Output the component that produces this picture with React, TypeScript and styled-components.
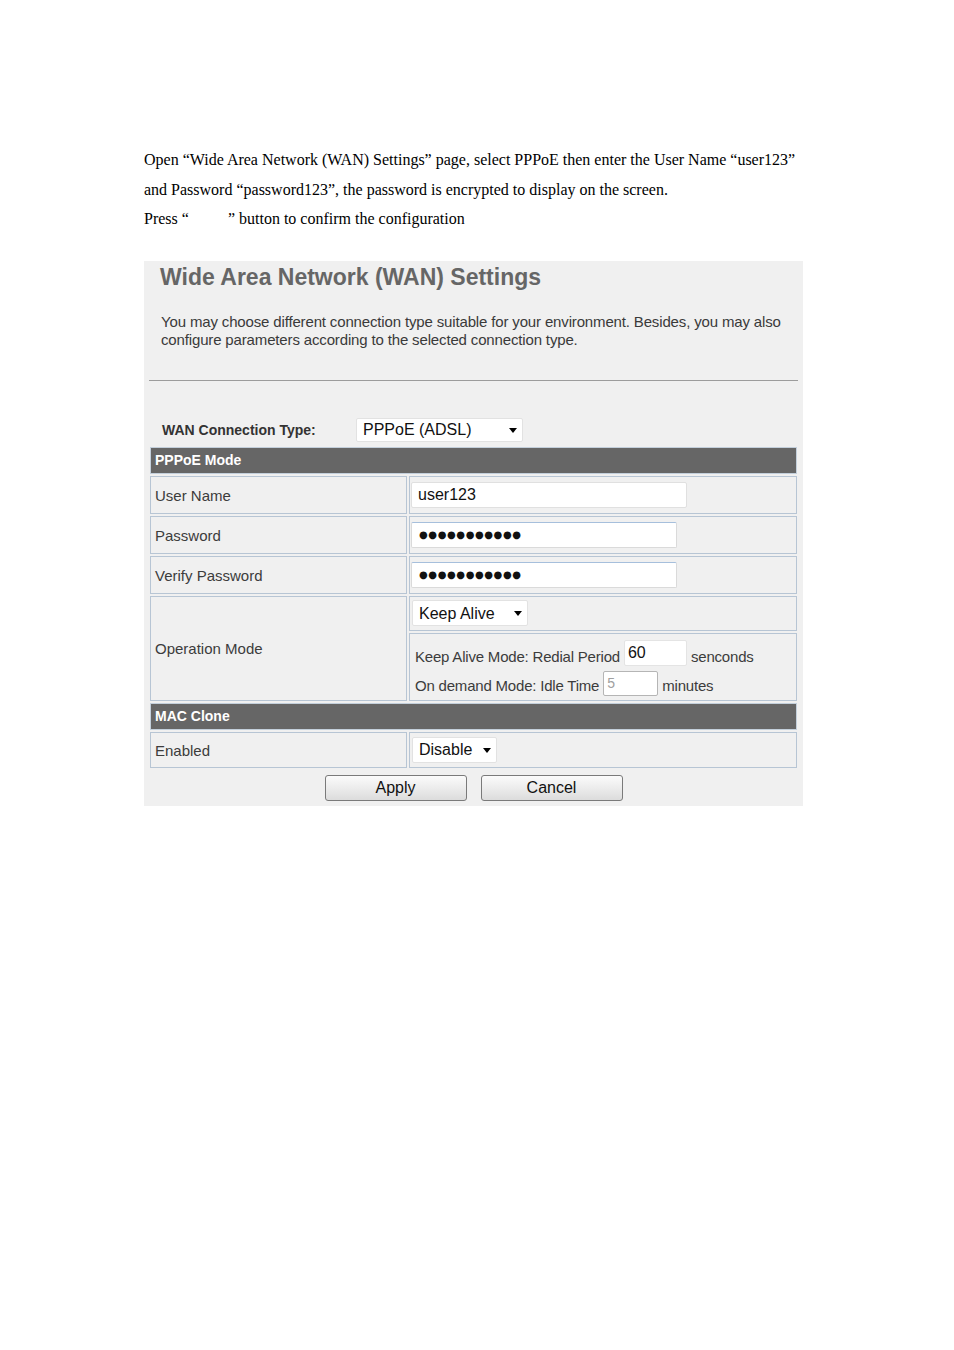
import React from 'react';
import styled, { createGlobalStyle } from 'styled-components';

const GlobalStyle = createGlobalStyle`
  html, body {
    margin: 0;
    padding: 0;
    background: #ffffff;
  }
  body {
    font-family: "Liberation Sans", Arial, sans-serif;
  }
`;

const Page = styled.div`
  width: 954px;
  min-height: 1350px;
  padding: 145px 0 0 144px;
  box-sizing: border-box;
`;

const Doc = styled.div`
  font-family: "Liberation Serif", "Times New Roman", serif;
  font-size: 16px;
  line-height: 29.5px;
  color: #000;
  width: 670px;
`;

const Line = styled.div`
  white-space: nowrap;
`;

const Blank = styled.span`
  display: inline-block;
  width: 39px;
`;

const Panel = styled.div`
  margin-top: 27px;
  width: 659px;
  background: #f0f0f0;
  padding: 2px 0 5px;
  box-sizing: border-box;
`;

const Title = styled.h1`
  margin: 0;
  padding-left: 16px;
  font-size: 23px;
  line-height: 28px;
  font-weight: bold;
  color: #666666;
`;

const Desc = styled.p`
  margin: 22px 0 0;
  padding-left: 17px;
  font-size: 15px;
  line-height: 18px;
  color: #3a3a3a;
  letter-spacing: -0.15px;
`;

const Rule = styled.hr`
  margin: 31px 5px 0;
  border: 0;
  border-top: 1px solid #9c9c9c;
  height: 0;
`;

const TypeRow = styled.div`
  display: flex;
  align-items: center;
  margin-top: 37px;
  padding-left: 18px;
  height: 24px;
`;

const TypeLabel = styled.label`
  width: 194px;
  font-size: 14px;
  font-weight: bold;
  color: #333;
`;

const SelectWrap = styled.div<{ $w: number }>`
  position: relative;
  width: ${({ $w }) => $w}px;
  height: 26px;
  margin-left: 1px;
`;

const WideSelect = styled(SelectWrap)`
  height: 24px;
  margin-left: 0;
`;

const Select = styled.select`
  appearance: none;
  -webkit-appearance: none;
  width: 100%;
  height: 100%;
  box-sizing: border-box;
  border: 1px solid #e2e2e2;
  border-radius: 2px;
  background: #fff;
  font-family: "Liberation Sans", Arial, sans-serif;
  font-size: 16px;
  color: #111;
  padding: 0 0 0 6px;
  outline: none;
`;

const Arrow = styled.span`
  position: absolute;
  right: 6px;
  top: 50%;
  margin-top: -2px;
  width: 0;
  height: 0;
  border-left: 4px solid transparent;
  border-right: 4px solid transparent;
  border-top: 5px solid #000;
  pointer-events: none;
`;

const Table = styled.table`
  margin: 3px 0 0 4px;
  width: 651px;
  border-collapse: separate;
  border-spacing: 2px;
  table-layout: fixed;
`;

const LabelCol = styled.col`
  width: 257px;
`;

const FieldCol = styled.col`
  width: 388px;
`;

const Row = styled.tr<{ $h: number }>`
  height: ${({ $h }) => $h}px;
`;

const HeadCell = styled.td`
  background: #666666;
  border: 1px solid #c3cfdb;
  color: #fff;
  font-weight: bold;
  font-size: 14px;
  padding: 0 0 0 4px;
  box-sizing: border-box;
`;

const Label = styled.td`
  border: 1px solid #b7c5d4;
  font-size: 15px;
  color: #3c3c3c;
  padding: 1px 0 0 4px;
  box-sizing: border-box;
`;

const Field = styled.td<{ $top?: boolean }>`
  border: 1px solid #b7c5d4;
  font-size: 15px;
  color: #3c3c3c;
  padding: ${({ $top }) => ($top ? '8px 0 0 2px' : '0 0 0 1px')};
  vertical-align: ${({ $top }) => ($top ? 'top' : 'middle')};
  box-sizing: border-box;
`;

const TextInput = styled.input<{ $w: number }>`
  display: block;
  width: ${({ $w }) => $w}px;
  height: 26px;
  box-sizing: border-box;
  border: 1px solid #e0e0e0;
  border-radius: 2px;
  background: #fff;
  font-family: "Liberation Sans", Arial, sans-serif;
  font-size: 16px;
  color: #111;
  padding: 0 6px;
  outline: none;
`;

const Dots = styled(TextInput)`
  border-color: #dadada;
  border-top-color: #a6bfdc;
  font-family: "DejaVu Sans", sans-serif;
  font-size: 10px;
  letter-spacing: 0.6px;
  padding-left: 7px;
`;

const ModeLine = styled.div`
  display: flex;
  align-items: center;
  height: 29px;
  gap: 4px;
  padding-left: 3px;
  white-space: nowrap;
  letter-spacing: -0.2px;
`;

const SmallInput = styled.input<{ $w: number; $off?: boolean }>`
  width: ${({ $w }) => $w}px;
  height: ${({ $off }) => ($off ? '25px' : '26px')};
  box-sizing: border-box;
  border: 1px solid ${({ $off }) => ($off ? '#b5b5b5' : '#e4e4e4')};
  border-radius: 2px;
  background: #fff;
  font-family: "Liberation Sans", Arial, sans-serif;
  font-size: ${({ $off }) => ($off ? '14px' : '16px')};
  color: ${({ $off }) => ($off ? '#a0a0a0' : '#111')};
  padding: 0 3px;
  outline: none;
  margin-top: ${({ $off }) => ($off ? '-4px' : '-6px')};
`;

const Buttons = styled.div`
  display: flex;
  justify-content: center;
  gap: 14px;
  margin-top: 5px;
`;

const Button = styled.button`
  width: 142px;
  height: 26px;
  border: 1px solid #7a7a7a;
  border-radius: 3px;
  background: linear-gradient(#fbfbfb 0%, #ececec 50%, #dcdcdc 100%);
  font-family: "Liberation Sans", Arial, sans-serif;
  font-size: 16px;
  color: #111;
  padding: 0;
`;

const Dropdown = ({ w, value, options }: { w: number; value: string; options: string[] }) => (
  <SelectWrap $w={w}>
    <Select defaultValue={value}>
      {options.map((o) => (
        <option key={o}>{o}</option>
      ))}
    </Select>
    <Arrow />
  </SelectWrap>
);

const App = () => {
  return (
    <>
      <GlobalStyle />
      <Page>
        <Doc>
          <Line>
            Open “Wide Area Network (WAN) Settings” page, select PPPoE then enter the User Name “user123”
          </Line>
          <Line>and Password “password123”, the password is encrypted to display on the screen.</Line>
          <Line>
            Press “<Blank />” button to confirm the configuration
          </Line>
        </Doc>
        <Panel>
          <Title>Wide Area Network (WAN) Settings</Title>
          <Desc>
            You may choose different connection type suitable for your environment. Besides, you may also
            <br />
            configure parameters according to the selected connection type.
          </Desc>
          <Rule />
          <TypeRow>
            <TypeLabel>WAN Connection Type:</TypeLabel>
            <WideSelect $w={167}>
              <Select defaultValue="PPPoE (ADSL)">
                <option>STATIC (fixed IP)</option>
                <option>DHCP (Auto config)</option>
                <option>PPPoE (ADSL)</option>
              </Select>
              <Arrow />
            </WideSelect>
          </TypeRow>
          <Table>
            <colgroup>
              <LabelCol />
              <FieldCol />
            </colgroup>
            <tbody>
              <Row $h={27}>
                <HeadCell colSpan={2}>PPPoE Mode</HeadCell>
              </Row>
              <Row $h={38}>
                <Label>User Name</Label>
                <Field>
                  <TextInput $w={276} defaultValue="user123" />
                </Field>
              </Row>
              <Row $h={38}>
                <Label>Password</Label>
                <Field>
                  <Dots $w={266} readOnly value="●●●●●●●●●●●" />
                </Field>
              </Row>
              <Row $h={38}>
                <Label>Verify Password</Label>
                <Field>
                  <Dots $w={266} readOnly value="●●●●●●●●●●●" />
                </Field>
              </Row>
              <Row $h={35}>
                <Label rowSpan={2}>Operation Mode</Label>
                <Field>
                  <Dropdown w={116} value="Keep Alive" options={['Keep Alive', 'On Demand', 'Manual']} />
                </Field>
              </Row>
              <Row $h={68}>
                <Field $top>
                  <ModeLine>
                    Keep Alive Mode: Redial Period
                    <SmallInput $w={63} defaultValue="60" />
                    senconds
                  </ModeLine>
                  <ModeLine>
                    On demand Mode: Idle Time
                    <SmallInput $w={55} $off disabled defaultValue="5" />
                    minutes
                  </ModeLine>
                </Field>
              </Row>
              <Row $h={27}>
                <HeadCell colSpan={2}>MAC Clone</HeadCell>
              </Row>
              <Row $h={36}>
                <Label>Enabled</Label>
                <Field>
                  <Dropdown w={85} value="Disable" options={['Disable', 'Enable']} />
                </Field>
              </Row>
            </tbody>
          </Table>
          <Buttons>
            <Button>Apply</Button>
            <Button>Cancel</Button>
          </Buttons>
        </Panel>
      </Page>
    </>
  );
};

export default App;
